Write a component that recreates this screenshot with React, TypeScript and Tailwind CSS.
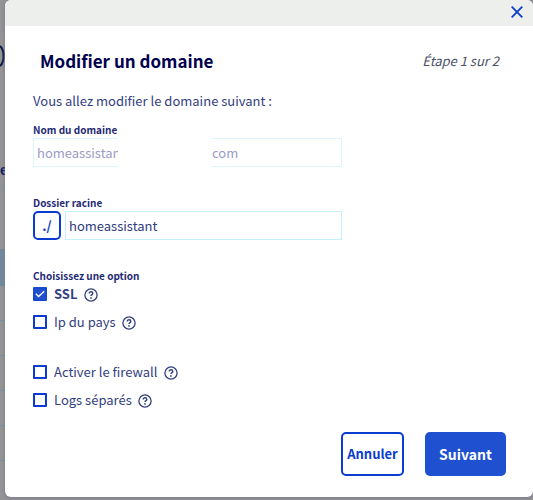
import { useState } from 'react';

type Option = {
  id: string;
  label: string;
  strong?: boolean;
};

const transportOptions: Option[] = [
  { id: 'ssl', label: 'SSL', strong: true },
  { id: 'ip', label: 'Ip du pays' },
];

const serviceOptions: Option[] = [
  { id: 'firewall', label: 'Activer le firewall' },
  { id: 'logs', label: 'Logs séparés' },
];

function HelpIcon() {
  return (
    <svg viewBox="0 0 14 14" className="h-3.5 w-3.5" fill="none" stroke="currentColor" aria-hidden="true">
      <circle cx="7" cy="7" r="6.1" strokeWidth="1.3" />
      <path d="M5.2 5.600c0-1.200.8-1.800 1.800-1.800s1.800.6 1.800 1.600c0 1.200-1.800 1.300-1.800 2.600" strokeWidth="1.4" />
      <circle cx="7" cy="9.900" r="0.85" fill="currentColor" stroke="none" />
    </svg>
  );
}

function OptionRow({ option, checked, onToggle }: { option: Option; checked: boolean; onToggle: () => void }) {
  return (
    <div className="flex h-5 items-center">
      <span className="relative flex h-3.5 w-3.5">
        <input
          id={option.id}
          type="checkbox"
          checked={checked}
          onChange={onToggle}
          className="h-3.5 w-3.5 appearance-none rounded-[1px] border-2 border-[#0a3cd0] bg-white checked:border-[#1848cc] checked:bg-[#1f50d0]"
        />
        {checked && (
          <svg viewBox="0 0 14 14" className="pointer-events-none absolute inset-0 h-3.5 w-3.5" fill="none" aria-hidden="true">
            <path d="M2.800 6.800l2.800 2.700L11.200 4.300" stroke="#fff" strokeWidth="1.4" />
          </svg>
        )}
      </span>
      <label
        htmlFor={option.id}
        className={option.strong ? 'ml-[7px] text-[13px] leading-5 font-bold' : 'ml-[7px] text-[13px] leading-5'}
      >
        {option.label}
      </label>
      <button type="button" aria-label={`Aide : ${option.label}`} className="mt-0.5 ml-1.5">
        <HelpIcon />
      </button>
    </div>
  );
}

function PageBehind() {
  return (
    <div className="absolute inset-0 overflow-hidden bg-[#949494] text-[#00185e]" aria-hidden="true">
      <div className="flex h-[160px] items-start pt-[44px]">
        <svg viewBox="0 0 6 24" className="h-6 w-1.5" fill="none">
          <path d="M0 2c2.400 2 3.600 6 3.600 10s-1.200 8-3.600 10" stroke="#0a1a4a" strokeWidth="2.2" />
        </svg>
      </div>
      <div className="h-[29px] w-[6px] border-b border-[#8094a3] text-[13px] leading-5 font-bold">e</div>
      <div className="h-[60px]" />
      <div className="h-[37px] bg-[#71899a]" />
      <div className="h-[35px] border-b border-[#7890a5]" />
      <div className="h-[35px] border-b border-[#7890a5]" />
      <div className="h-[35px] border-b border-[#7890a5]" />
      <div className="h-[35px] border-b border-[#7890a5]" />
      <div className="h-[35px] border-b border-[#7890a5]" />
    </div>
  );
}

export default function App() {
  const [checked, setChecked] = useState<Record<string, boolean>>({ ssl: true });
  const [folder, setFolder] = useState('homeassistant');

  const toggle = (id: string) => setChecked((prev) => ({ ...prev, [id]: !prev[id] }));

  return (
    <div className="relative min-h-screen pb-[3px] pl-[5px] font-['Noto_Sans_CJK_SC','Noto_Sans',sans-serif]">
      <PageBehind />

      <div
        role="dialog"
        aria-labelledby="dialog-title"
        className="relative overflow-hidden rounded-md bg-white text-[#33407f] shadow-[0_1px_3px_1px_#77779999]"
      >
        <div className="flex h-[26px] items-center justify-end bg-[#ecefec] pr-2.5">
          <button type="button" aria-label="Fermer" className="-mt-0.5">
            <svg viewBox="0 0 12 12" className="h-3 w-3" fill="none" stroke="#0a3cd0" strokeWidth="1.8" aria-hidden="true">
              <path d="M0.700 0.700l10.600 10.600M11.300 0.700L0.700 11.300" />
            </svg>
          </button>
        </div>

        <form className="pr-[27px] pb-[21px] pl-7" onSubmit={(e) => e.preventDefault()}>
          <div className="flex items-center justify-between px-[7px] pt-[21px]">
            <h1 id="dialog-title" className="text-[17px] leading-7 font-bold text-[#00004f]">
              Modifier un domaine
            </h1>
            <span className="text-[13px] leading-5 text-[#4b5166] italic">Étape 1 sur 2</span>
          </div>

          <p className="mt-4 text-[13px] leading-5">Vous allez modifier le domaine suivant :</p>

          <div className="mt-[11px] max-w-[309px]">
            <label htmlFor="domain" className="block text-[10px] leading-4 font-bold text-[#1f2a75]">
              Nom du domaine
            </label>
            <div className="flex h-[29px] justify-between">
              <input
                id="domain"
                disabled
                value="homeassistant"
                className="w-[85px] border border-r-0 border-[#dcf6ff] pl-[3px] text-[13px] text-[#9a9cc4]"
              />
              <input
                aria-label="Extension du domaine"
                disabled
                value="com"
                className="w-[130px] border border-l-0 border-[#dcf6ff] text-[13px] text-[#9a9cc4]"
              />
            </div>
          </div>

          <div className="mt-7 max-w-[309px]">
            <label htmlFor="folder" className="block text-[10px] leading-4 font-bold text-[#1f2a75]">
              Dossier racine
            </label>
            <div className="flex h-[29px] gap-1">
              <button
                type="button"
                aria-label="Parcourir les dossiers"
                className="w-7 rounded-[5px] border-2 border-[#0a3cd0] text-[13px] leading-5 font-bold text-[#0a3cd0]"
              >
                ./
              </button>
              <input
                id="folder"
                value={folder}
                onChange={(e) => setFolder(e.target.value)}
                className="min-w-0 flex-1 border border-[#c4effc] pl-[3px] text-[13px] text-[#2f3a7c]"
              />
            </div>
          </div>

          <fieldset className="mt-7">
            <legend className="text-[10px] leading-4 font-bold text-[#1f2a75]">Choisissez une option</legend>
            <div className="flex flex-col gap-2">
              {transportOptions.map((option) => (
                <OptionRow key={option.id} option={option} checked={!!checked[option.id]} onToggle={() => toggle(option.id)} />
              ))}
            </div>
            <div className="mt-[30px] flex flex-col gap-2">
              {serviceOptions.map((option) => (
                <OptionRow key={option.id} option={option} checked={!!checked[option.id]} onToggle={() => toggle(option.id)} />
              ))}
            </div>
          </fieldset>

          <div className="mt-[22px] flex justify-end gap-[21px]">
            <button
              type="button"
              className="h-11 w-[63px] rounded-[5px] border-2 border-[#0a3cd0] text-[13px] font-bold whitespace-nowrap text-[#0a3cd0]"
            >
              Annuler
            </button>
            <button type="submit" className="h-11 w-[81px] rounded-[5px] bg-[#1f50d0] text-sm font-bold text-white">
              Suivant
            </button>
          </div>
        </form>
      </div>
    </div>
  );
}
